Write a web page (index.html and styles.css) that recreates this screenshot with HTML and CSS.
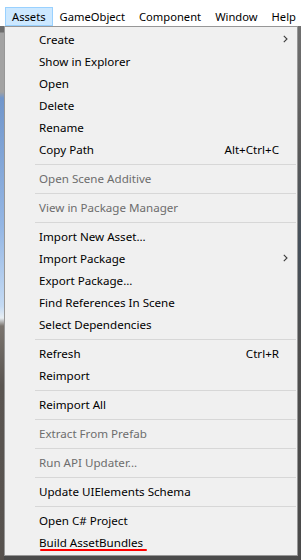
FILE: index.html
```html
<!DOCTYPE html>
<html lang="en">
<head>
  <meta charset="UTF-8" />
  <meta name="viewport" content="width=device-width, initial-scale=1" />
  <title>Assets menu</title>
  <link rel="stylesheet" href="styles.css">
</head>
<body>

  <header class="menubar">
    <span class="bar-item active">Assets</span>
    <span class="bar-item">GameObject</span>
    <span class="bar-item">Component</span>
    <span class="bar-item">Window</span>
    <span class="bar-item">Help</span>
  </header>

  <div class="stage">
    <div class="scene-left"></div>

    <div class="dropdown">
      <div class="item"><span class="label">Create</span><span class="arrow"><svg width="5" height="8" viewBox="0 0 5 8"><path d="M0.8 0.8 L4 4 L0.8 7.2" fill="none" stroke="#3c3c3c" stroke-width="1.1"/></svg></span></div>
      <div class="item"><span class="label">Show in Explorer</span><span class="arrow"></span></div>
      <div class="item"><span class="label">Open</span><span class="arrow"></span></div>
      <div class="item"><span class="label">Delete</span><span class="arrow"></span></div>
      <div class="item"><span class="label">Rename</span><span class="arrow"></span></div>
      <div class="item"><span class="label">Copy Path</span><span class="shortcut">Alt+Ctrl+C</span><span class="arrow"></span></div>
      <div class="sep"></div>
      <div class="item disabled"><span class="label">Open Scene Additive</span><span class="arrow"></span></div>
      <div class="sep"></div>
      <div class="item disabled"><span class="label">View in Package Manager</span><span class="arrow"></span></div>
      <div class="sep"></div>
      <div class="item"><span class="label">Import New Asset...</span><span class="arrow"></span></div>
      <div class="item"><span class="label">Import Package</span><span class="arrow"><svg width="5" height="8" viewBox="0 0 5 8"><path d="M0.8 0.8 L4 4 L0.8 7.2" fill="none" stroke="#3c3c3c" stroke-width="1.1"/></svg></span></div>
      <div class="item"><span class="label">Export Package...</span><span class="arrow"></span></div>
      <div class="item"><span class="label">Find References In Scene</span><span class="arrow"></span></div>
      <div class="item"><span class="label">Select Dependencies</span><span class="arrow"></span></div>
      <div class="sep"></div>
      <div class="item"><span class="label">Refresh</span><span class="shortcut">Ctrl+R</span><span class="arrow"></span></div>
      <div class="item"><span class="label">Reimport</span><span class="arrow"></span></div>
      <div class="sep"></div>
      <div class="item"><span class="label">Reimport All</span><span class="arrow"></span></div>
      <div class="sep"></div>
      <div class="item disabled"><span class="label">Extract From Prefab</span><span class="arrow"></span></div>
      <div class="sep"></div>
      <div class="item disabled"><span class="label">Run API Updater...</span><span class="arrow"></span></div>
      <div class="sep"></div>
      <div class="item"><span class="label">Update UIElements Schema</span><span class="arrow"></span></div>
      <div class="sep"></div>
      <div class="item"><span class="label">Open C# Project</span><span class="arrow"></span></div>
      <div class="item"><span class="label"><span class="marked">Build AssetBundles</span></span><span class="arrow"></span></div>
    </div>

    <div class="scene-right"></div>
  </div>

</body>
</html>
```

FILE: styles.css
```css
html, body {
  margin: 0;
  height: 100%;
}

body {
  font-family: 'Noto Sans', sans-serif;
  font-size: 11.6px;
  color: #000;
  background: #4b4b4b;
  overflow: hidden;
}

/* top menu bar */
.menubar {
  background: #fff;
  height: 26px;
  padding: 7px 0 0 5px;
  box-sizing: border-box;
  display: flex;
  white-space: nowrap;
  font-size: 11.2px;
}

.bar-item {
  padding: 0 6px;
  border: 1px solid transparent;
  line-height: 17px;
  height: 17px;
}

.bar-item.active {
  background: #cce8ff;
  border-color: #99d1ff;
}

/* scene behind the menu */
.stage {
  display: flex;
  align-items: flex-start;
  height: calc(100% - 26px);
}

.scene-left {
  width: 4px;
  align-self: stretch;
  background: linear-gradient(to bottom,
    #6d6d6d 0, #6d6d6d 6px, #a2a2a2 7px, #a2a2a2 66px,
    #7196cb 72px, #94b6e4 200px, #c4daf3 280px, #e8eef3 292px,
    #7a746e 300px, #5a5551 360px, #57524e 100%);
}

.scene-right {
  width: 3px;
  align-self: stretch;
  background: linear-gradient(to bottom, #707070 0, #5b5b5b 120px, #46505a 220px, #4f4f4f 320px, #4a4a4a 100%);
}

/* dropdown */
.dropdown {
  width: 294px;
  box-sizing: border-box;
  background: #f0f0f0;
  border: 1px solid #979797;
  padding: 1px 0 2px;
}

.item {
  display: flex;
  align-items: center;
  height: 22px;
  padding-left: 34px;
  white-space: nowrap;
}

.item .label {
  flex: 1;
}

.item.disabled {
  color: #6d6d6d;
}

.shortcut {
  text-align: right;
}

.arrow {
  width: 18px;
  display: flex;
  align-items: center;
  padding-left: 4px;
  box-sizing: border-box;
}

.sep {
  height: 1px;
  background: #d7d7d7;
  margin: 4px 1px 2px 30px;
}

.marked {
  position: relative;
}

.marked::after {
  content: '';
  position: absolute;
  left: 1px;
  right: -4px;
  bottom: -1px;
  height: 2px;
  border-radius: 1px;
  background: #f00;
}
```
